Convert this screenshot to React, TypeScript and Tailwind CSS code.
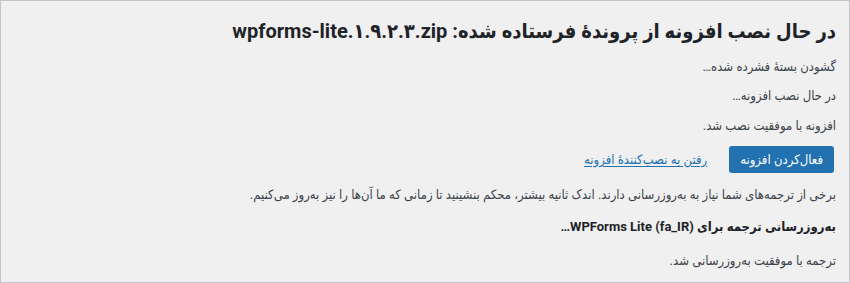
import React from "react";

export default function App() {
  const font = { fontFamily: '"Roboto", "DejaVu Sans Condensed", "DejaVu Sans", sans-serif' };
  return (
    <div
      dir="rtl"
      style={font}
      className="w-[850px] h-[283px] border border-[#c3c4c7] bg-[#f0f0f1] pr-[13px] pl-[13px] overflow-hidden"
    >
      <h1 className="mt-[17px] text-[20px] leading-[26px] font-bold text-[#1d2327]">
        در حال نصب افزونه از پروندهٔ فرستاده شده: wpforms-lite.۱.۹.۲.۳.zip
      </h1>
      <p className="mt-[14px] text-[13px] leading-[18px] text-[#3c434a]">گشودن بستهٔ فشرده شده…</p>
      <p className="mt-[11px] text-[13px] leading-[18px] text-[#3c434a]">در حال نصب افزونه…</p>
      <p className="mt-[12px] text-[13px] leading-[18px] text-[#3c434a]">افزونه با موفقیت نصب شد.</p>
      <div className="mt-[11px] flex items-center gap-[22px] pr-[2px]">
        <span className="inline-flex h-[27px] items-center rounded-[3px] bg-[#2271b1] px-[11px] text-[13px] text-white">
          فعال‌کردن افزونه
        </span>
        <span className="text-[13px] text-[#2271b1] underline underline-offset-2">
          رفتن به نصب‌کنندهٔ افزونه
        </span>
      </div>
      <p className="mt-[13px] text-[13px] leading-[18px] text-[#3c434a]">
        برخی از ترجمه‌های شما نیاز به به‌روزرسانی دارند. اندک ثانیه بیشتر، محکم بنشینید تا زمانی که ما آن‌ها را نیز به‌روز می‌کنیم.
      </p>
      <p className="mt-[14px] text-[13px] leading-[18px] font-bold text-[#1d2327]">
        به‌روزرسانی ترجمه برای WPForms Lite (fa_IR)…
      </p>
      <p className="mt-[16px] text-[13px] leading-[18px] text-[#3c434a]">ترجمه با موفقیت به‌روزرسانی شد.</p>
    </div>
  );
}
